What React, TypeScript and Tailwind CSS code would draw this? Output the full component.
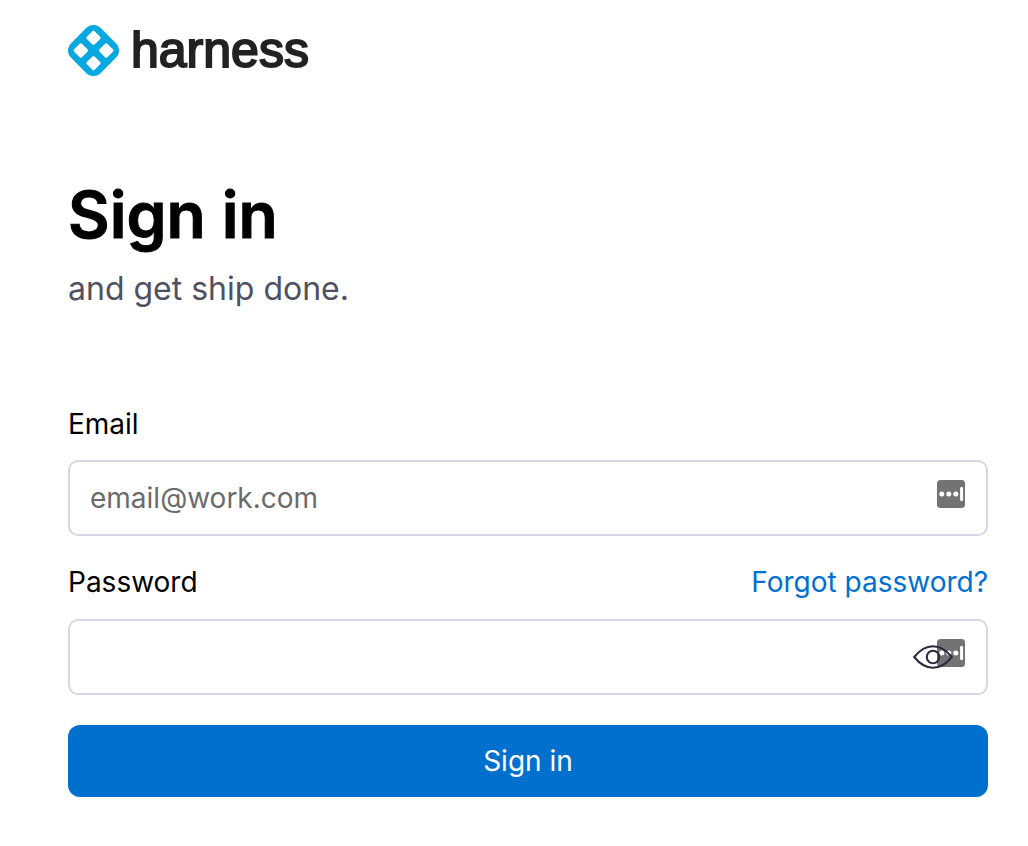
import React from "react";

function HarnessMark() {
  return (
    <svg viewBox="0 0 51 51" className="h-[51px] w-[51px] shrink-0" aria-hidden="true">
      <rect x="4.5" y="4.5" width="42" height="42" rx="10" fill="#07a7df" transform="rotate(45 25.5 25.5)" />
      <g fill="#fff" transform="rotate(45 25.5 25.5)">
        <rect x="11" y="11" width="11" height="11" rx="1.6" />
        <rect x="29" y="11" width="11" height="11" rx="1.6" />
        <rect x="11" y="29" width="11" height="11" rx="1.6" />
        <rect x="29" y="29" width="11" height="11" rx="1.6" />
      </g>
    </svg>
  );
}

function PasswordManagerIcon() {
  return (
    <svg
      viewBox="0 0 28 28"
      className="pointer-events-none absolute top-5 right-[23px] h-7 w-7"
      aria-hidden="true"
    >
      <rect width="28" height="28" rx="3.5" fill="#737373" />
      <g fill="#fff">
        <circle cx="4.8" cy="14" r="2.5" />
        <circle cx="11.8" cy="14" r="2.5" />
        <circle cx="18.8" cy="14" r="2.5" />
        <rect x="23.1" y="7" width="3" height="14" rx="1.2" />
      </g>
    </svg>
  );
}

function EyeIcon() {
  return (
    <svg viewBox="0 0 40 24" className="h-6 w-10" fill="none" stroke="#2d2c3e" strokeWidth="2.1" aria-hidden="true">
      <path d="M1.2 12C7 4.8 13 1.3 20 1.3S33 4.8 38.8 12C33 19.2 27 22.7 20 22.7S7 19.2 1.2 12Z" strokeLinejoin="round" />
      <circle cx="20" cy="12" r="6.2" />
    </svg>
  );
}

const inputClass =
  "block h-[76px] w-full rounded-[10px] border-2 border-[#d5d6e6] bg-white pl-5 pr-24 text-[28px] text-black outline-none placeholder:text-[#6b6b6b] placeholder:opacity-100";

export default function App() {
  return (
    <main className="bg-white px-10 pt-[25px] pb-12 pl-[68px] font-['Inter',sans-serif] text-black">
      <header className="flex h-[51px] items-center gap-3">
        <HarnessMark />
        <span className="pb-[2px] font-['Liberation_Sans',sans-serif] text-[50px] leading-[50px] text-[#222] [-webkit-text-stroke:2px_#222]">
          harness
        </span>
      </header>

      <h1 className="mt-[99px] text-[64px] leading-[80px] font-semibold [-webkit-text-stroke:1px_#000]">Sign in</h1>
      <p className="mt-[14px] text-[32px] leading-[40px] text-[#4f5162]">and get ship done.</p>

      <form className="mt-[97px]" onSubmit={(event) => event.preventDefault()}>
        <label htmlFor="email" className="block text-[28px] leading-[36px]">
          Email
        </label>
        <div className="relative mt-[18px]">
          <input id="email" type="email" placeholder="email@work.com" className={inputClass} />
          <PasswordManagerIcon />
        </div>

        <div className="mt-7 flex items-center justify-between text-[28px] leading-[36px]">
          <label htmlFor="password">Password</label>
          <a href="#forgot-password" className="text-[#0070cf]">
            Forgot password?
          </a>
        </div>
        <div className="relative mt-[19px]">
          <input id="password" type="password" className={inputClass} />
          <PasswordManagerIcon />
          <button type="button" aria-label="Show password" className="absolute top-[26px] right-[35px]">
            <EyeIcon />
          </button>
        </div>

        <button
          type="submit"
          className="mt-[30px] h-[72px] w-full rounded-xl bg-[#0070cf] text-[28px] leading-[36px] text-white"
        >
          Sign in
        </button>
      </form>
    </main>
  );
}
